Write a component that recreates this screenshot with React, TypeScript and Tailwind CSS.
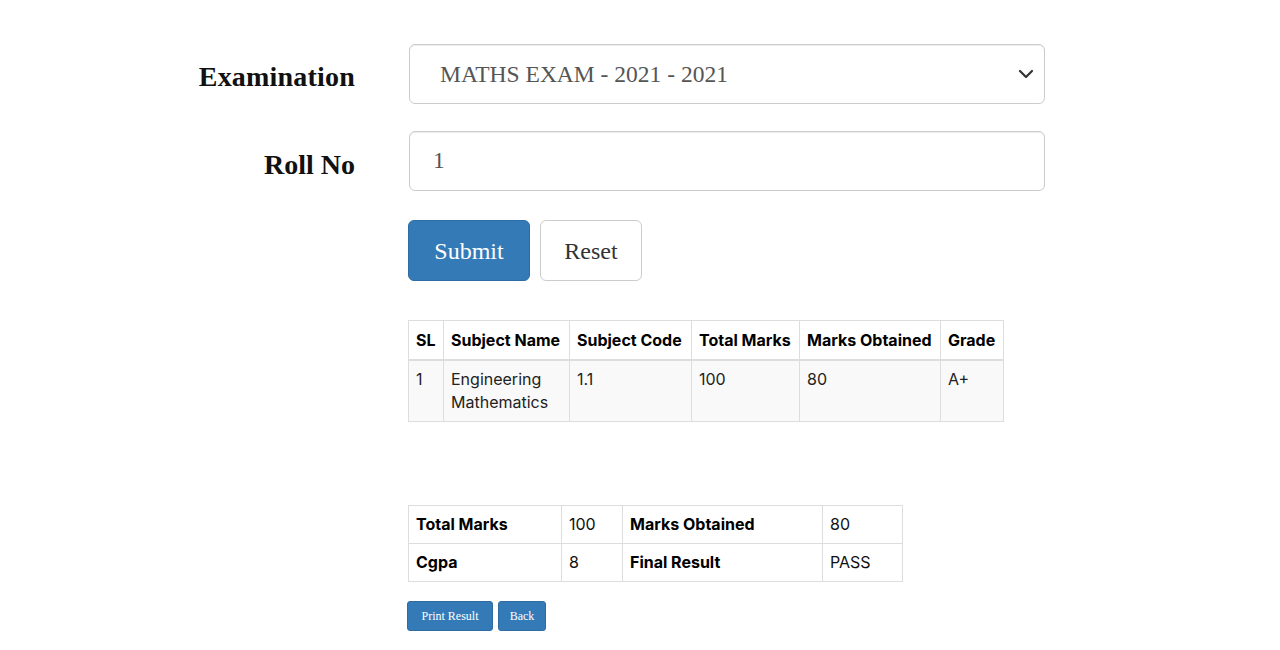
import React from "react";

const serif = { fontFamily: '"Liberation Serif", "DejaVu Serif", serif' };

export default function App() {
  const th = "border border-[#dddddd] border-b-2 px-[7px] py-[7px] text-left font-bold text-black leading-[24px]";
  const td = "border border-[#dddddd] px-[7px] py-[7px] align-top text-[#222] leading-[23px]";
  const td2 = "border border-[#dddddd] px-[7px] py-[7px] text-[#111] leading-[23px]";
  return (
    <div className="w-[1280px] h-[650px] bg-white overflow-hidden">
      <div className="pt-[44px]">
        {/* Examination row */}
        <div className="flex items-center">
          <div className="w-[355px] text-right text-[28px] font-bold text-[#111] pt-[6px] tracking-[0.2px]" style={serif}>
            Examination
          </div>
          <div className="ml-[54px] w-[636px] h-[60px] border border-[#cccccc] rounded-[6px] shadow-[inset_0_1px_1px_rgba(0,0,0,0.075)] flex items-center justify-between pl-[30px] pr-[8px]">
            <span className="text-[23.5px] text-[#555555] mt-[2px]" style={serif}>
              MATHS EXAM - 2021 - 2021
            </span>
            <svg width="20" height="20" viewBox="0 0 20 20" fill="none">
              <path d="M4 7l6 6 6-6" stroke="#333" strokeWidth="2.2" strokeLinecap="round" strokeLinejoin="round" />
            </svg>
          </div>
        </div>
        {/* Roll No row */}
        <div className="flex items-center mt-[27px]">
          <div className="w-[355px] text-right text-[28px] font-bold text-[#111] pt-[7px]" style={serif}>
            Roll No
          </div>
          <div className="ml-[54px] w-[636px] h-[60px] border border-[#cccccc] rounded-[6px] shadow-[inset_0_1px_1px_rgba(0,0,0,0.075)] flex items-center pl-[23px]">
            <span className="text-[23.5px] text-[#555555]" style={serif}>
              1
            </span>
          </div>
        </div>
        {/* Buttons */}
        <div className="flex ml-[408px] mt-[29px] gap-[10px]">
          <button className="w-[122px] h-[61px] rounded-[6px] bg-[#337ab7] border border-[#2e6da4] text-white text-[24px]" style={serif}>
            Submit
          </button>
          <button className="w-[102px] h-[61px] rounded-[6px] bg-white border border-[#cccccc] text-[#333] text-[24px]" style={serif}>
            Reset
          </button>
        </div>
        {/* Results table */}
        <div className="ml-[408px] mt-[39px]" style={{ fontFamily: 'Inter, "Liberation Sans", sans-serif' }}>
          <table className="border-collapse text-[16px]">
            <thead>
              <tr>
                <th className={th + " w-[35px]"}>SL</th>
                <th className={th + " w-[126px]"}>Subject Name</th>
                <th className={th + " w-[122px]"}>Subject Code</th>
                <th className={th + " w-[108px]"}>Total Marks</th>
                <th className={th + " w-[141px]"}>Marks Obtained</th>
                <th className={th + " w-[63px]"}>Grade</th>
              </tr>
            </thead>
            <tbody>
              <tr className="bg-[#f9f9f9]">
                <td className={td}>1</td>
                <td className={td}>
                  Engineering
                  <br />
                  Mathematics
                </td>
                <td className={td}>1.1</td>
                <td className={td}>100</td>
                <td className={td}>80</td>
                <td className={td}>A+</td>
              </tr>
            </tbody>
          </table>
        </div>
        {/* Summary table */}
        <div className="ml-[408px] mt-[83px]" style={{ fontFamily: 'Inter, "Liberation Sans", sans-serif' }}>
          <table className="border-collapse text-[16px]">
            <tbody>
              <tr>
                <td className={td2 + " w-[153px] font-bold text-black"}>Total Marks</td>
                <td className={td2 + " w-[61px]"}>100</td>
                <td className={td2 + " w-[200px] font-bold text-black"}>Marks Obtained</td>
                <td className={td2 + " w-[80px]"}>80</td>
              </tr>
              <tr>
                <td className={td2 + " font-bold text-black"}>Cgpa</td>
                <td className={td2}>8</td>
                <td className={td2 + " font-bold text-black"}>Final Result</td>
                <td className={td2}>PASS</td>
              </tr>
            </tbody>
          </table>
        </div>
        {/* Bottom buttons */}
        <div className="flex ml-[407px] mt-[19px] gap-[5px]">
          <button className="w-[86px] h-[30px] rounded-[3px] bg-[#337ab7] border border-[#2e6da4] text-white text-[12px]" style={serif}>
            Print Result
          </button>
          <button className="w-[48px] h-[30px] rounded-[3px] bg-[#337ab7] border border-[#2e6da4] text-white text-[12px]" style={serif}>
            Back
          </button>
        </div>
      </div>
    </div>
  );
}
